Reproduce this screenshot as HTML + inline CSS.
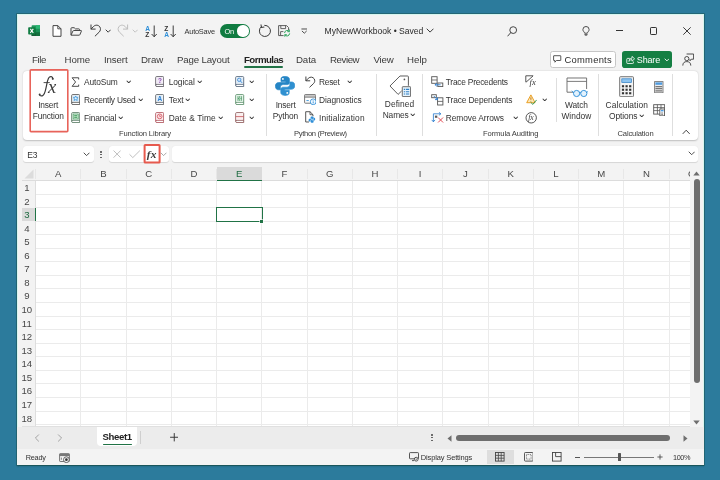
<!DOCTYPE html>
<html><head><meta charset="utf-8"><title>Excel</title>
<style>
html,body{margin:0;padding:0;}
body{width:720px;height:480px;overflow:hidden;background:#2c7b9c;position:relative;font-family:"Liberation Sans",sans-serif;}
#root{position:absolute;left:0;top:0;width:720px;height:480px;overflow:hidden;will-change:transform;}
.b{position:absolute;box-sizing:border-box;display:block;}
.t{position:absolute;white-space:nowrap;line-height:14px;font-family:"Liberation Sans",sans-serif;}
</style></head><body><div id="root">
<div class="b" style="left:16.70px;top:13.50px;width:687.50px;height:451.10px;background:#f3f3f3;box-shadow:0 0 0 0.8px rgba(28,88,90,0.7),0 1.2px 1.6px 0.3px rgba(10,60,62,0.65);"></div>
<div class="b" style="left:16.70px;top:13.50px;width:687.50px;height:451.10px;border:0.8px solid rgba(214,246,238,0.95);"></div>
<div class="b" style="left:22.50px;top:70.50px;width:675.50px;height:69.50px;background:#ffffff;border-radius:4px;box-shadow:0 0.6px 1.6px rgba(0,0,0,0.22);"></div>
<div class="b" style="left:23.00px;top:146.30px;width:71.00px;height:15.80px;background:#fff;border-radius:3px;box-shadow:0 0.5px 0.8px rgba(0,0,0,0.12);"></div>
<div class="b" style="left:109.00px;top:146.30px;width:60.00px;height:15.80px;background:#fff;border-radius:3px;box-shadow:0 0.5px 0.8px rgba(0,0,0,0.12);"></div>
<div class="b" style="left:172.00px;top:146.30px;width:526.20px;height:15.80px;background:#fff;border-radius:3px;box-shadow:0 0.5px 0.8px rgba(0,0,0,0.12);"></div>
<div class="b" style="left:22.00px;top:166.50px;width:668.00px;height:14.00px;background:#f3f3f3;"></div>
<div class="b" style="left:35.50px;top:180.50px;width:654.50px;height:245.80px;background:#fff;"></div>
<div class="b" style="left:22.00px;top:180.50px;width:13.50px;height:245.80px;background:#f3f3f3;"></div>
<div class="b" style="left:35.00px;top:180.50px;width:1px;height:245.80px;background:#ebebeb;"></div>
<div class="b" style="left:80.25px;top:180.50px;width:1px;height:245.80px;background:#ebebeb;"></div>
<div class="b" style="left:125.50px;top:180.50px;width:1px;height:245.80px;background:#ebebeb;"></div>
<div class="b" style="left:170.75px;top:180.50px;width:1px;height:245.80px;background:#ebebeb;"></div>
<div class="b" style="left:216.00px;top:180.50px;width:1px;height:245.80px;background:#ebebeb;"></div>
<div class="b" style="left:261.25px;top:180.50px;width:1px;height:245.80px;background:#ebebeb;"></div>
<div class="b" style="left:306.50px;top:180.50px;width:1px;height:245.80px;background:#ebebeb;"></div>
<div class="b" style="left:351.75px;top:180.50px;width:1px;height:245.80px;background:#ebebeb;"></div>
<div class="b" style="left:397.00px;top:180.50px;width:1px;height:245.80px;background:#ebebeb;"></div>
<div class="b" style="left:442.25px;top:180.50px;width:1px;height:245.80px;background:#ebebeb;"></div>
<div class="b" style="left:487.50px;top:180.50px;width:1px;height:245.80px;background:#ebebeb;"></div>
<div class="b" style="left:532.75px;top:180.50px;width:1px;height:245.80px;background:#ebebeb;"></div>
<div class="b" style="left:578.00px;top:180.50px;width:1px;height:245.80px;background:#ebebeb;"></div>
<div class="b" style="left:623.25px;top:180.50px;width:1px;height:245.80px;background:#ebebeb;"></div>
<div class="b" style="left:668.50px;top:180.50px;width:1px;height:245.80px;background:#ebebeb;"></div>
<div class="b" style="left:35.50px;top:180.00px;width:654.50px;height:1px;background:#ebebeb;"></div>
<div class="b" style="left:35.50px;top:193.56px;width:654.50px;height:1px;background:#ebebeb;"></div>
<div class="b" style="left:35.50px;top:207.12px;width:654.50px;height:1px;background:#ebebeb;"></div>
<div class="b" style="left:35.50px;top:220.68px;width:654.50px;height:1px;background:#ebebeb;"></div>
<div class="b" style="left:35.50px;top:234.24px;width:654.50px;height:1px;background:#ebebeb;"></div>
<div class="b" style="left:35.50px;top:247.80px;width:654.50px;height:1px;background:#ebebeb;"></div>
<div class="b" style="left:35.50px;top:261.36px;width:654.50px;height:1px;background:#ebebeb;"></div>
<div class="b" style="left:35.50px;top:274.92px;width:654.50px;height:1px;background:#ebebeb;"></div>
<div class="b" style="left:35.50px;top:288.48px;width:654.50px;height:1px;background:#ebebeb;"></div>
<div class="b" style="left:35.50px;top:302.04px;width:654.50px;height:1px;background:#ebebeb;"></div>
<div class="b" style="left:35.50px;top:315.60px;width:654.50px;height:1px;background:#ebebeb;"></div>
<div class="b" style="left:35.50px;top:329.16px;width:654.50px;height:1px;background:#ebebeb;"></div>
<div class="b" style="left:35.50px;top:342.72px;width:654.50px;height:1px;background:#ebebeb;"></div>
<div class="b" style="left:35.50px;top:356.28px;width:654.50px;height:1px;background:#ebebeb;"></div>
<div class="b" style="left:35.50px;top:369.84px;width:654.50px;height:1px;background:#ebebeb;"></div>
<div class="b" style="left:35.50px;top:383.40px;width:654.50px;height:1px;background:#ebebeb;"></div>
<div class="b" style="left:35.50px;top:396.96px;width:654.50px;height:1px;background:#ebebeb;"></div>
<div class="b" style="left:35.50px;top:410.52px;width:654.50px;height:1px;background:#ebebeb;"></div>
<div class="b" style="left:35.50px;top:424.08px;width:654.50px;height:1px;background:#ebebeb;"></div>
<div class="b" style="left:35.00px;top:169.00px;width:1.00px;height:9.50px;background:#e7e7e7;"></div>
<div class="b" style="left:80.25px;top:169.00px;width:1.00px;height:9.50px;background:#e7e7e7;"></div>
<div class="b" style="left:125.50px;top:169.00px;width:1.00px;height:9.50px;background:#e7e7e7;"></div>
<div class="b" style="left:170.75px;top:169.00px;width:1.00px;height:9.50px;background:#e7e7e7;"></div>
<div class="b" style="left:216.00px;top:169.00px;width:1.00px;height:9.50px;background:#e7e7e7;"></div>
<div class="b" style="left:261.25px;top:169.00px;width:1.00px;height:9.50px;background:#e7e7e7;"></div>
<div class="b" style="left:306.50px;top:169.00px;width:1.00px;height:9.50px;background:#e7e7e7;"></div>
<div class="b" style="left:351.75px;top:169.00px;width:1.00px;height:9.50px;background:#e7e7e7;"></div>
<div class="b" style="left:397.00px;top:169.00px;width:1.00px;height:9.50px;background:#e7e7e7;"></div>
<div class="b" style="left:442.25px;top:169.00px;width:1.00px;height:9.50px;background:#e7e7e7;"></div>
<div class="b" style="left:487.50px;top:169.00px;width:1.00px;height:9.50px;background:#e7e7e7;"></div>
<div class="b" style="left:532.75px;top:169.00px;width:1.00px;height:9.50px;background:#e7e7e7;"></div>
<div class="b" style="left:578.00px;top:169.00px;width:1.00px;height:9.50px;background:#e7e7e7;"></div>
<div class="b" style="left:623.25px;top:169.00px;width:1.00px;height:9.50px;background:#e7e7e7;"></div>
<div class="b" style="left:668.50px;top:169.00px;width:1.00px;height:9.50px;background:#e7e7e7;"></div>
<div class="b" style="left:22.00px;top:180.00px;width:668.00px;height:1.00px;background:#dcdcdc;"></div>
<div class="b" style="left:35.00px;top:180.50px;width:1.00px;height:245.80px;background:#dedede;"></div>
<div class="b" style="left:216.50px;top:167.00px;width:45.25px;height:13.50px;background:#dadada;"></div>
<div class="b" style="left:216.50px;top:179.50px;width:45.25px;height:1.30px;background:#217346;"></div>
<div class="b" style="left:22.00px;top:207.62px;width:13.50px;height:13.56px;background:#dadada;"></div>
<div class="b" style="left:34.60px;top:207.62px;width:1.30px;height:13.56px;background:#217346;"></div>
<svg class="b" style="left:24.00px;top:169.00px;" width="10.00" height="10.00" viewBox="0 0 10 10"><path d="M9.5 0.5 L9.5 9.5 L0.5 9.5 Z" fill="#dcdcdc"/></svg>
<span class="t" style="left:54.92px;top:167px;font-size:9.6px;letter-spacing:-0.000px;color:#474747;">A</span>
<span class="t" style="left:100.17px;top:167px;font-size:9.6px;letter-spacing:0.000px;color:#474747;">B</span>
<span class="t" style="left:145.16px;top:167px;font-size:9.6px;letter-spacing:-0.000px;color:#474747;">C</span>
<span class="t" style="left:190.41px;top:167px;font-size:9.6px;letter-spacing:-0.000px;color:#474747;">D</span>
<span class="t" style="left:235.92px;top:167px;font-size:9.6px;letter-spacing:0.000px;color:#1e6b41;">E</span>
<span class="t" style="left:281.44px;top:167px;font-size:9.6px;letter-spacing:0.000px;color:#474747;">F</span>
<span class="t" style="left:325.89px;top:167px;font-size:9.6px;letter-spacing:-0.000px;color:#474747;">G</span>
<span class="t" style="left:371.41px;top:167px;font-size:9.6px;letter-spacing:-0.000px;color:#474747;">H</span>
<span class="t" style="left:418.79px;top:167px;font-size:9.6px;letter-spacing:0.000px;color:#474747;">I</span>
<span class="t" style="left:462.98px;top:167px;font-size:9.6px;letter-spacing:-0.000px;color:#474747;">J</span>
<span class="t" style="left:507.42px;top:167px;font-size:9.6px;letter-spacing:-0.000px;color:#474747;">K</span>
<span class="t" style="left:553.21px;top:167px;font-size:9.6px;letter-spacing:0.000px;color:#474747;">L</span>
<span class="t" style="left:597.13px;top:167px;font-size:9.6px;letter-spacing:-0.000px;color:#474747;">M</span>
<span class="t" style="left:642.91px;top:167px;font-size:9.6px;letter-spacing:-0.000px;color:#474747;">N</span>
<div class="b" style="left:669.00px;top:166.5px;width:21.00px;height:14px;overflow:hidden;"><span class="t" style="left:18.93px;top:0.5px;font-size:9.6px;color:#3c3c3c;">O</span></div>
<span class="t" style="left:24.13px;top:181px;font-size:9.6px;letter-spacing:0.000px;color:#474747;">1</span>
<span class="t" style="left:24.13px;top:195px;font-size:9.6px;letter-spacing:0.000px;color:#474747;">2</span>
<span class="t" style="left:24.13px;top:208px;font-size:9.6px;letter-spacing:0.000px;color:#1e6b41;">3</span>
<span class="t" style="left:24.13px;top:222px;font-size:9.6px;letter-spacing:0.000px;color:#474747;">4</span>
<span class="t" style="left:24.13px;top:235px;font-size:9.6px;letter-spacing:0.000px;color:#474747;">5</span>
<span class="t" style="left:24.13px;top:249px;font-size:9.6px;letter-spacing:0.000px;color:#474747;">6</span>
<span class="t" style="left:24.13px;top:262px;font-size:9.6px;letter-spacing:0.000px;color:#474747;">7</span>
<span class="t" style="left:24.13px;top:276px;font-size:9.6px;letter-spacing:0.000px;color:#474747;">8</span>
<span class="t" style="left:24.13px;top:289px;font-size:9.6px;letter-spacing:0.000px;color:#474747;">9</span>
<span class="t" style="left:21.46px;top:303px;font-size:9.6px;letter-spacing:0.000px;color:#474747;">10</span>
<span class="t" style="left:21.82px;top:317px;font-size:9.6px;letter-spacing:0.000px;color:#474747;">11</span>
<span class="t" style="left:21.46px;top:330px;font-size:9.6px;letter-spacing:0.000px;color:#474747;">12</span>
<span class="t" style="left:21.46px;top:344px;font-size:9.6px;letter-spacing:0.000px;color:#474747;">13</span>
<span class="t" style="left:21.46px;top:357px;font-size:9.6px;letter-spacing:0.000px;color:#474747;">14</span>
<span class="t" style="left:21.46px;top:371px;font-size:9.6px;letter-spacing:0.000px;color:#474747;">15</span>
<span class="t" style="left:21.46px;top:384px;font-size:9.6px;letter-spacing:0.000px;color:#474747;">16</span>
<span class="t" style="left:21.46px;top:398px;font-size:9.6px;letter-spacing:0.000px;color:#474747;">17</span>
<span class="t" style="left:21.46px;top:412px;font-size:9.6px;letter-spacing:0.000px;color:#474747;">18</span>
<div class="b" style="left:215.70px;top:206.82px;width:46.85px;height:15.16px;border:1.3px solid #217346;"></div>
<div class="b" style="left:260.15px;top:219.58px;width:3.20px;height:3.20px;background:#217346;box-shadow:0 0 0 0.6px #fff;"></div>
<svg class="b" style="left:693.20px;top:170.60px;" width="7.00" height="5.00" viewBox="0 0 7 5"><path d="M3.5 0.5 L6.7 4.5 L0.3 4.5 Z" fill="#6e6e6e"/></svg>
<div class="b" style="left:693.60px;top:179.00px;width:6.20px;height:203.50px;background:#6e6e6e;border-radius:3.1px;"></div>
<svg class="b" style="left:693.20px;top:420.20px;" width="7.00" height="5.00" viewBox="0 0 7 5"><path d="M0.3 0.5 L6.7 0.5 L3.5 4.5 Z" fill="#6e6e6e"/></svg>
<div class="b" style="left:17.00px;top:426.80px;width:687.00px;height:22.00px;background:#ececec;"></div>
<div class="b" style="left:22.00px;top:426.30px;width:668.00px;height:0.80px;background:#e0e0e0;"></div>
<div class="b" style="left:97.00px;top:426.50px;width:40.00px;height:19.80px;background:#fff;border-radius:0 0 4px 4px;"></div>
<span class="t" style="left:102.50px;top:430px;font-size:9.6px;letter-spacing:-0.363px;color:#222;font-weight:bold;">Sheet1</span>
<div class="b" style="left:102.50px;top:443.80px;width:29.30px;height:1.40px;background:#217346;border-radius:1px;"></div>
<div class="b" style="left:140.40px;top:431.00px;width:0.80px;height:12.50px;background:#cfcfcf;"></div>
<svg class="b" style="left:34.00px;top:433.50px;" width="6.00" height="8.00" viewBox="0 0 6 8"><path d="M4.6 0.8 L1.4 4 L4.6 7.2" fill="none" stroke="#9a9a9a" stroke-width="0.9" stroke-linecap="round" stroke-linejoin="round"/></svg>
<svg class="b" style="left:57.00px;top:433.50px;" width="6.00" height="8.00" viewBox="0 0 6 8"><path d="M1.4 0.8 L4.6 4 L1.4 7.2" fill="none" stroke="#9a9a9a" stroke-width="0.9" stroke-linecap="round" stroke-linejoin="round"/></svg>
<svg class="b" style="left:169.50px;top:433.20px;" width="8.50" height="8.50" viewBox="0 0 8.5 8.5"><path d="M4.25 0.5 V8 M0.5 4.25 H8" fill="none" stroke="#333" stroke-width="0.95" stroke-linecap="round"/></svg>
<div class="b" style="left:431.30px;top:434.35px;width:1.40px;height:1.40px;background:#555;border-radius:50%;"></div>
<div class="b" style="left:431.30px;top:436.95px;width:1.40px;height:1.40px;background:#555;border-radius:50%;"></div>
<div class="b" style="left:431.30px;top:439.55px;width:1.40px;height:1.40px;background:#555;border-radius:50%;"></div>
<svg class="b" style="left:446.50px;top:434.50px;" width="5.00" height="7.00" viewBox="0 0 5 7"><path d="M4.5 0.3 L4.5 6.7 L0.5 3.5 Z" fill="#6e6e6e"/></svg>
<div class="b" style="left:455.50px;top:434.90px;width:214.20px;height:6.20px;background:#6e6e6e;border-radius:3.1px;"></div>
<svg class="b" style="left:682.80px;top:434.50px;" width="5.00" height="7.00" viewBox="0 0 5 7"><path d="M0.5 0.3 L0.5 6.7 L4.5 3.5 Z" fill="#6e6e6e"/></svg>
<div class="b" style="left:17.00px;top:448.80px;width:687.00px;height:16.20px;background:#f3f3f3;"></div>
<span class="t" style="left:25.70px;top:451px;font-size:7.3px;letter-spacing:-0.200px;color:#333;">Ready</span>
<span class="t" style="left:420.80px;top:451px;font-size:7.5px;letter-spacing:-0.148px;color:#333;">Display Settings</span>
<span class="t" style="left:673.10px;top:451px;font-size:7.3px;letter-spacing:-0.442px;color:#333;">100%</span>
<svg class="b" style="left:58.60px;top:452.60px;" width="11.60" height="10.40" viewBox="0 0 11.6 10.4"><rect x="0.6" y="0.7" width="9.8" height="7.8" rx="0.6" fill="#f3f3f3" stroke="#666" stroke-width="0.9"/><rect x="0.6" y="0.7" width="9.8" height="2.4" fill="#777"/><path d="M2.4 4.6 V6.8" stroke="#666" stroke-width="0.8"/><circle cx="7.4" cy="6.7" r="2.9" fill="#f3f3f3" stroke="#555" stroke-width="0.9"/><circle cx="7.4" cy="6.7" r="1.35" fill="#333"/></svg>
<svg class="b" style="left:409.20px;top:452.40px;" width="10.50" height="10.50" viewBox="0 0 10.5 10.5"><rect x="0.5" y="0.6" width="9" height="6.2" rx="0.7" fill="none" stroke="#444" stroke-width="0.9"/><path d="M3 8.6 H5" stroke="#444" stroke-width="0.9"/><circle cx="7.2" cy="7.2" r="1.9" fill="#f3f3f3" stroke="#444" stroke-width="0.9"/><circle cx="7.2" cy="7.2" r="0.6" fill="#444"/></svg>
<div class="b" style="left:486.80px;top:449.80px;width:27.20px;height:14.60px;background:#dedede;"></div>
<svg class="b" style="left:495.00px;top:452.40px;" width="9.60" height="9.60" viewBox="0 0 9.6 9.6"><rect x="0.5" y="0.5" width="8.6" height="8.6" fill="none" stroke="#444" stroke-width="0.9"/><path d="M3.4 0.5 V9.1 M6.2 0.5 V9.1 M0.5 3.4 H9.1 M0.5 6.2 H9.1" stroke="#444" stroke-width="0.8"/></svg>
<svg class="b" style="left:523.60px;top:452.40px;" width="9.60" height="9.60" viewBox="0 0 9.6 9.6"><rect x="0.5" y="0.5" width="8.6" height="8.6" rx="0.8" fill="none" stroke="#444" stroke-width="0.9"/><rect x="2.5" y="2.5" width="4.6" height="4.6" fill="none" stroke="#666" stroke-width="0.8" stroke-dasharray="1 0.7"/></svg>
<svg class="b" style="left:552.20px;top:452.40px;" width="9.60" height="9.60" viewBox="0 0 9.6 9.6"><rect x="0.5" y="0.5" width="8.6" height="8.6" fill="none" stroke="#444" stroke-width="0.9"/><path d="M3.6 0.5 V4.6 H9.1" fill="none" stroke="#444" stroke-width="0.9"/></svg>
<div class="b" style="left:575.00px;top:457.00px;width:4.80px;height:0.90px;background:#555;"></div>
<div class="b" style="left:584.00px;top:457.10px;width:70.00px;height:0.80px;background:#777;"></div>
<div class="b" style="left:618.00px;top:453.30px;width:3.20px;height:8.00px;background:#555;border-radius:0.6px;"></div>
<svg class="b" style="left:657.00px;top:454.40px;" width="6.00" height="6.00" viewBox="0 0 6 6"><path d="M3 0.4 V5.6 M0.4 3 H5.6" stroke="#444" stroke-width="0.85"/></svg>
<svg class="b" style="left:27.60px;top:24.80px;" width="12.60" height="11.60" viewBox="0 0 12.6 11.6"><rect x="3.6" y="0.2" width="8.8" height="11.2" rx="0.9" fill="#1e9a5d"/><rect x="8" y="0.2" width="4.4" height="3.7" fill="#2bb673"/><rect x="3.6" y="3.9" width="4.4" height="3.7" fill="#107c41"/><rect x="8" y="3.9" width="4.4" height="3.7" fill="#1b9257"/><rect x="3.6" y="7.6" width="8.8" height="3.8" fill="#185c37"/><rect x="8" y="7.6" width="4.4" height="3.8" fill="#13703d"/><rect x="0.2" y="2.3" width="7.2" height="7.2" rx="0.8" fill="#107c41"/><path d="M2.3 3.9 L5.3 7.9 M5.3 3.9 L2.3 7.9" stroke="#fff" stroke-width="1.05"/></svg>
<svg class="b" style="left:51.60px;top:25.00px;" width="10.00" height="12.00" viewBox="0 0 10 12"><path d="M1 0.6 H5.8 L9 3.8 V11.3 H1 Z" fill="#fff" stroke="#3b3b3b" stroke-width="0.95" stroke-linejoin="round"/><path d="M5.8 0.6 V3.8 H9" fill="none" stroke="#3b3b3b" stroke-width="0.9" stroke-linejoin="round"/></svg>
<svg class="b" style="left:69.60px;top:26.60px;" width="12.20" height="9.00" viewBox="0 0 12.2 9"><path d="M1 7.9 V1.5 Q1 0.7 1.8 0.7 H4.2 L5.4 1.9 H8.8 Q9.6 1.9 9.6 2.7 V3.6" fill="none" stroke="#3b3b3b" stroke-width="0.95" stroke-linejoin="round"/><path d="M1 8.2 L3 3.9 Q3.2 3.5 3.7 3.5 H10.9 Q11.7 3.5 11.4 4.2 L9.9 7.7 Q9.7 8.2 9.2 8.2 Z" fill="#f3f3f3" stroke="#3b3b3b" stroke-width="0.95" stroke-linejoin="round"/></svg>
<svg class="b" style="left:90.40px;top:24.40px;" width="11.60" height="12.80" viewBox="0 0 11.6 12.8"><path d="M1 0.9 V5.1 H5.2" fill="none" stroke="#3b3b3b" stroke-width="1" stroke-linecap="round" stroke-linejoin="round"/><path d="M1.2 4.9 L3.6 2.4 C5.6 0.5 8.6 0.9 9.9 3 C11 4.9 10.5 6.8 9 8.3 L5.2 12" fill="none" stroke="#3b3b3b" stroke-width="1" stroke-linecap="round" stroke-linejoin="round"/></svg>
<svg class="b" style="left:104.80px;top:28.70px;" width="6.40" height="4.20" viewBox="-1 -1 6.4 4.2"><path d="M0 0 L2.2 2.2 L4.4 0" fill="none" stroke="#3b3b3b" stroke-width="1.0" stroke-linecap="round" stroke-linejoin="round"/></svg>
<svg class="b" style="left:117.40px;top:24.40px;" width="11.60" height="12.80" viewBox="0 0 11.6 12.8"><g transform="translate(11.6 0) scale(-1 1)"><path d="M1 0.9 V5.1 H5.2" fill="none" stroke="#bdbdbd" stroke-width="1" stroke-linecap="round" stroke-linejoin="round"/><path d="M1.2 4.9 L3.6 2.4 C5.6 0.5 8.6 0.9 9.9 3 C11 4.9 10.5 6.8 9 8.3 L5.2 12" fill="none" stroke="#bdbdbd" stroke-width="1" stroke-linecap="round" stroke-linejoin="round"/></g></svg>
<svg class="b" style="left:132.10px;top:28.70px;" width="6.40" height="4.20" viewBox="-1 -1 6.4 4.2"><path d="M0 0 L2.2 2.2 L4.4 0" fill="none" stroke="#c4c4c4" stroke-width="1.0" stroke-linecap="round" stroke-linejoin="round"/></svg>
<svg class="b" style="left:144.60px;top:24.60px;" width="13.00" height="13.00" viewBox="0 0 13 13"><text x="0.2" y="5.6" font-family="Liberation Sans" font-weight="bold" font-size="6.6" fill="#2f8fd8">A</text><text x="0.2" y="12.2" font-family="Liberation Sans" font-weight="bold" font-size="6.6" fill="#333">Z</text><path d="M9.2 0.9 V11.6 M6.9 9.3 L9.2 11.7 L11.5 9.3" fill="none" stroke="#333" stroke-width="0.95" stroke-linecap="round" stroke-linejoin="round"/></svg>
<svg class="b" style="left:164.40px;top:24.60px;" width="13.00" height="13.00" viewBox="0 0 13 13"><text x="0.2" y="5.6" font-family="Liberation Sans" font-weight="bold" font-size="6.6" fill="#333">Z</text><text x="0.2" y="12.2" font-family="Liberation Sans" font-weight="bold" font-size="6.6" fill="#2f8fd8">A</text><path d="M9.2 0.9 V11.6 M6.9 9.3 L9.2 11.7 L11.5 9.3" fill="none" stroke="#333" stroke-width="0.95" stroke-linecap="round" stroke-linejoin="round"/></svg>
<span class="t" style="left:184.60px;top:25px;font-size:7.4px;letter-spacing:-0.236px;color:#333;">AutoSave</span>
<div class="b" style="left:219.60px;top:24.00px;width:30.40px;height:14.00px;background:#107c41;border-radius:7px;"></div>
<div class="b" style="left:237.40px;top:25.40px;width:11.20px;height:11.20px;background:#fff;border-radius:50%;"></div>
<span class="t" style="left:224.60px;top:25px;font-size:7.4px;letter-spacing:-0.235px;color:#fff;">On</span>
<svg class="b" style="left:258.20px;top:24.00px;" width="13.40" height="13.60" viewBox="0 0 13.4 13.6"><path d="M3.3 2.6 A5.6 5.6 0 1 0 6.7 1.3" fill="none" stroke="#3b3b3b" stroke-width="1" stroke-linecap="round"/><path d="M3.4 0.8 V3.4 H6" fill="none" stroke="#3b3b3b" stroke-width="1" stroke-linecap="round" stroke-linejoin="round" transform="rotate(-8 3.4 3.4)"/></svg>
<svg class="b" style="left:278.40px;top:25.20px;" width="12.40" height="11.60" viewBox="0 0 12.4 11.6"><path d="M0.6 0.6 H8.6 L10.6 2.6 V5.4 M5.6 10.6 H0.6 V0.6" fill="none" stroke="#555" stroke-width="0.95" stroke-linejoin="round"/><path d="M2.8 0.6 V3.6 H7.6 V0.6" fill="none" stroke="#555" stroke-width="0.9"/><path d="M2.6 10.4 V6.6 H5.4" fill="none" stroke="#555" stroke-width="0.9"/><path d="M6.6 7.6 A2.6 2.6 0 0 1 11.2 6.4 M11.6 8.8 A2.6 2.6 0 0 1 7 10" fill="none" stroke="#2aa35a" stroke-width="1" stroke-linecap="round"/><path d="M11.4 4.9 V6.7 H9.7 M6.8 11.4 V9.7 H8.5" fill="none" stroke="#2aa35a" stroke-width="0.9" stroke-linecap="round" stroke-linejoin="round"/></svg>
<svg class="b" style="left:300.80px;top:28.40px;" width="6.60" height="6.60" viewBox="0 0 6.6 6.6"><path d="M0.8 1 H5.8" stroke="#3b3b3b" stroke-width="0.9" stroke-linecap="round"/><path d="M1.2 3.2 L3.3 5.2 L5.4 3.2" fill="none" stroke="#3b3b3b" stroke-width="0.9" stroke-linecap="round" stroke-linejoin="round"/></svg>
<span class="t" style="left:324.60px;top:24px;font-size:8.6px;letter-spacing:-0.038px;color:#2b2b2b;">MyNewWorkbook • Saved</span>
<svg class="b" style="left:426.30px;top:28.45px;" width="8.20" height="5.10" viewBox="-1 -1 8.2 5.1"><path d="M0 0 L3.1 3.1 L6.2 0" fill="none" stroke="#3b3b3b" stroke-width="1.0" stroke-linecap="round" stroke-linejoin="round"/></svg>
<svg class="b" style="left:507.20px;top:25.60px;" width="10.40" height="11.00" viewBox="0 0 10.4 11"><circle cx="6.2" cy="4.1" r="3.4" fill="none" stroke="#3b3b3b" stroke-width="0.95"/><path d="M3.8 6.6 L0.8 10" stroke="#3b3b3b" stroke-width="0.95" stroke-linecap="round"/></svg>
<svg class="b" style="left:581.80px;top:25.60px;" width="8.00" height="10.60" viewBox="0 0 8 10.6"><path d="M2.6 7.2 C2.6 6 0.9 5.4 0.9 3.6 A3.1 3.1 0 0 1 7.1 3.6 C7.1 5.4 5.4 6 5.4 7.2 Z" fill="none" stroke="#3b3b3b" stroke-width="0.9" stroke-linejoin="round"/><path d="M2.8 8.6 H5.2 M3.3 9.9 H4.7" stroke="#3b3b3b" stroke-width="0.85" stroke-linecap="round"/></svg>
<div class="b" style="left:616.00px;top:30.20px;width:7.20px;height:0.95px;background:#333;"></div>
<div class="b" style="left:650.20px;top:27.00px;width:7.20px;height:7.60px;border:0.95px solid #333;border-radius:1.2px;"></div>
<svg class="b" style="left:683.00px;top:26.80px;" width="8.00" height="8.00" viewBox="0 0 8 8"><path d="M0.6 0.6 L7.4 7.4 M7.4 0.6 L0.6 7.4" stroke="#333" stroke-width="0.95" stroke-linecap="round"/></svg>
<span class="t" style="left:32.00px;top:53px;font-size:9.7px;letter-spacing:-0.407px;color:#3a3a3a;">File</span>
<span class="t" style="left:64.50px;top:53px;font-size:9.7px;letter-spacing:-0.093px;color:#3a3a3a;">Home</span>
<span class="t" style="left:104.00px;top:53px;font-size:9.7px;letter-spacing:-0.126px;color:#3a3a3a;">Insert</span>
<span class="t" style="left:141.00px;top:53px;font-size:9.7px;letter-spacing:-0.159px;color:#3a3a3a;">Draw</span>
<span class="t" style="left:177.00px;top:53px;font-size:9.7px;letter-spacing:-0.179px;color:#3a3a3a;">Page Layout</span>
<span class="t" style="left:244.00px;top:53px;font-size:9.7px;letter-spacing:-0.557px;color:#222;font-weight:bold;">Formulas</span>
<span class="t" style="left:296.00px;top:53px;font-size:9.7px;letter-spacing:-0.122px;color:#3a3a3a;">Data</span>
<span class="t" style="left:330.00px;top:53px;font-size:9.7px;letter-spacing:-0.434px;color:#3a3a3a;">Review</span>
<span class="t" style="left:373.40px;top:53px;font-size:9.7px;letter-spacing:-0.162px;color:#3a3a3a;">View</span>
<span class="t" style="left:407.00px;top:53px;font-size:9.7px;letter-spacing:0.013px;color:#3a3a3a;">Help</span>
<div class="b" style="left:244.00px;top:66.20px;width:39.20px;height:1.90px;background:#217346;border-radius:1px;"></div>
<div class="b" style="left:550.00px;top:51.20px;width:66.00px;height:16.40px;background:#fff;border:0.8px solid #c6c6c6;border-radius:2.6px;"></div>
<svg class="b" style="left:553.20px;top:55.20px;" width="8.40" height="8.00" viewBox="0 0 8.4 8"><path d="M0.9 0.7 H7.5 Q7.8 0.7 7.8 1 V5.2 Q7.8 5.5 7.5 5.5 H3.4 L1.9 7.2 V5.5 H0.9 Q0.6 5.5 0.6 5.2 V1 Q0.6 0.7 0.9 0.7 Z" fill="none" stroke="#3b3b3b" stroke-width="0.85" stroke-linejoin="round"/></svg>
<span class="t" style="left:564.60px;top:53px;font-size:9.4px;letter-spacing:0.245px;color:#2b2b2b;">Comments</span>
<div class="b" style="left:622.00px;top:51.20px;width:50.40px;height:16.40px;background:#157f43;border-radius:2.8px;"></div>
<svg class="b" style="left:626.00px;top:54.60px;" width="9.20" height="9.40" viewBox="0 0 9.2 9.4"><path d="M3.4 3.4 H1.6 Q0.8 3.4 0.8 4.2 V7.8 Q0.8 8.6 1.6 8.6 H6.6 Q7.4 8.6 7.4 7.8 V7" fill="none" stroke="#fff" stroke-width="0.85" stroke-linecap="round"/><path d="M3 6.4 C3 4.4 4.2 3.2 6 3.2 V1.4 L8.6 3.8 L6 6.2 V4.6 C4.6 4.6 3.6 5.2 3 6.4 Z" fill="none" stroke="#fff" stroke-width="0.8" stroke-linejoin="round"/></svg>
<span class="t" style="left:636.80px;top:53px;font-size:9px;letter-spacing:-0.163px;color:#fff;">Share</span>
<svg class="b" style="left:663.70px;top:57.85px;" width="5.80" height="3.90" viewBox="-1 -1 5.8 3.9"><path d="M0 0 L1.9 1.9 L3.8 0" fill="none" stroke="#fff" stroke-width="0.9" stroke-linecap="round" stroke-linejoin="round"/></svg>
<svg class="b" style="left:681.60px;top:53.40px;" width="12.60" height="13.00" viewBox="0 0 12.6 13"><path d="M4.6 1 H11.6 V6.2 H9.4 L8 7.8 V6.2" fill="none" stroke="#3b3b3b" stroke-width="0.9" stroke-linejoin="round"/><circle cx="4.8" cy="5.6" r="2.1" fill="#f3f3f3" stroke="#3b3b3b" stroke-width="0.9"/><path d="M0.8 12.2 C0.8 9.8 2.4 8.6 4.8 8.6 C7.2 8.6 8.8 9.8 8.8 12.2" fill="none" stroke="#3b3b3b" stroke-width="0.9" stroke-linecap="round"/></svg>
<svg class="b" style="left:36.00px;top:72.00px;" width="24.00" height="28.00" viewBox="0 0 24 28"><path d="M16.9 6.9 C16.9 4.2 13.9 3.6 12.5 6.2 C11.4 8.3 11 11.2 10.2 15 C9.4 19 8.7 23.1 6.3 23.8 C4.8 24.2 3.7 23.5 3.4 22.6" fill="none" stroke="#3a3a3a" stroke-width="1.2" stroke-linecap="round"/><path d="M8 10.6 H13.4" stroke="#3a3a3a" stroke-width="0.9" stroke-linecap="round"/><circle cx="16.7" cy="6.7" r="0.95" fill="#3a3a3a"/><circle cx="3.7" cy="22.5" r="0.95" fill="#3a3a3a"/></svg>
<span class="t" style="left:48.1px;top:73.9px;font-family:'Liberation Serif',serif;font-style:italic;font-size:18.6px;line-height:26px;color:#3a3a3a;">x</span>
<span class="t" style="left:38.20px;top:98px;font-size:8.4px;letter-spacing:-0.168px;color:#333;">Insert</span>
<span class="t" style="left:32.70px;top:109px;font-size:8.4px;letter-spacing:-0.114px;color:#333;">Function</span>
<svg class="b" style="left:28.00px;top:68.00px;" width="42.00" height="65.00" viewBox="0 0 42 65"><rect x="2.2" y="1.9" width="37.6" height="61.7" rx="0.8" fill="none" stroke="#e8635a" stroke-width="1.6"/></svg>
<svg class="b" style="left:70.90px;top:77.00px;" width="8.80" height="10.20" viewBox="0 0 8.8 10.6"><path d="M7.8 2.2 V0.8 H1 L4.6 5.2 L1 9.7 H7.8 V8.3" fill="none" stroke="#3b3b3b" stroke-width="0.95" stroke-linejoin="round" stroke-linecap="round"/></svg>
<span class="t" style="left:84.00px;top:75px;font-size:8.4px;letter-spacing:-0.107px;color:#333;">AutoSum</span>
<svg class="b" style="left:126.25px;top:79.72px;" width="5.50" height="3.75" viewBox="-1 -1 5.5 3.75"><path d="M0 0 L1.75 1.75 L3.5 0" fill="none" stroke="#3b3b3b" stroke-width="1.05" stroke-linecap="round" stroke-linejoin="round"/></svg>
<svg class="b" style="left:70.80px;top:93.80px;" width="9.40" height="11.40" viewBox="0 0 9.4 11.4"><path d="M0.7 9.4 V1.5 Q0.7 0.6 1.6 0.6 H7.8 Q8.7 0.6 8.7 1.5 V10.6 H1.9 Q0.7 10.6 0.7 9.4 Q0.7 8.3 1.9 8.3 H8.7" fill="#fff" stroke="#555" stroke-width="0.9" stroke-linejoin="round"/><rect x="1.7" y="1.6" width="6" height="5.8" fill="#cfe6f8"/><path d="M4.7 2 L5.4 3.6 L7.1 3.7 L5.8 4.8 L6.2 6.5 L4.7 5.6 L3.2 6.5 L3.6 4.8 L2.3 3.7 L4 3.6 Z" fill="#eef7fe" stroke="#2f8fd8" stroke-width="0.7" stroke-linejoin="round"/></svg>
<span class="t" style="left:84.00px;top:93px;font-size:8.4px;letter-spacing:-0.225px;color:#333;">Recently Used</span>
<svg class="b" style="left:137.95px;top:97.62px;" width="5.50" height="3.75" viewBox="-1 -1 5.5 3.75"><path d="M0 0 L1.75 1.75 L3.5 0" fill="none" stroke="#3b3b3b" stroke-width="1.05" stroke-linecap="round" stroke-linejoin="round"/></svg>
<svg class="b" style="left:70.80px;top:111.80px;" width="9.40" height="11.40" viewBox="0 0 9.4 11.4"><path d="M0.7 9.4 V1.5 Q0.7 0.6 1.6 0.6 H7.8 Q8.7 0.6 8.7 1.5 V10.6 H1.9 Q0.7 10.6 0.7 9.4 Q0.7 8.3 1.9 8.3 H8.7" fill="#fff" stroke="#5a7d66" stroke-width="0.9" stroke-linejoin="round"/><rect x="1.7" y="1.6" width="6" height="5.8" fill="#57a56f"/><rect x="2.9" y="2.7" width="3.6" height="3.6" fill="none" stroke="#c9ecd2" stroke-width="0.7"/><path d="M2.9 4.5 H6.5" stroke="#c9ecd2" stroke-width="0.6"/></svg>
<span class="t" style="left:84.00px;top:111px;font-size:8.4px;letter-spacing:-0.157px;color:#333;">Financial</span>
<svg class="b" style="left:118.45px;top:115.62px;" width="5.50" height="3.75" viewBox="-1 -1 5.5 3.75"><path d="M0 0 L1.75 1.75 L3.5 0" fill="none" stroke="#3b3b3b" stroke-width="1.05" stroke-linecap="round" stroke-linejoin="round"/></svg>
<svg class="b" style="left:155.00px;top:75.60px;" width="9.40" height="11.40" viewBox="0 0 9.4 11.4"><path d="M0.7 9.4 V1.5 Q0.7 0.6 1.6 0.6 H7.8 Q8.7 0.6 8.7 1.5 V10.6 H1.9 Q0.7 10.6 0.7 9.4 Q0.7 8.3 1.9 8.3 H8.7" fill="#fff" stroke="#5e5a63" stroke-width="0.9" stroke-linejoin="round"/><rect x="1.7" y="1.6" width="6" height="5.8" fill="#f1e8f7"/><text x="2.9" y="6.6" font-family="Liberation Sans" font-weight="bold" font-size="6.4" fill="#8a4fb0">?</text></svg>
<span class="t" style="left:168.70px;top:75px;font-size:8.4px;letter-spacing:-0.074px;color:#333;">Logical</span>
<svg class="b" style="left:197.05px;top:79.72px;" width="5.50" height="3.75" viewBox="-1 -1 5.5 3.75"><path d="M0 0 L1.75 1.75 L3.5 0" fill="none" stroke="#3b3b3b" stroke-width="1.05" stroke-linecap="round" stroke-linejoin="round"/></svg>
<svg class="b" style="left:155.00px;top:93.60px;" width="9.40" height="11.40" viewBox="0 0 9.4 11.4"><path d="M0.7 9.4 V1.5 Q0.7 0.6 1.6 0.6 H7.8 Q8.7 0.6 8.7 1.5 V10.6 H1.9 Q0.7 10.6 0.7 9.4 Q0.7 8.3 1.9 8.3 H8.7" fill="#fff" stroke="#565b62" stroke-width="0.9" stroke-linejoin="round"/><rect x="1.7" y="1.6" width="6" height="5.8" fill="#deeefb"/><text x="2.4" y="6.9" font-family="Liberation Sans" font-weight="bold" font-size="6.4" fill="#2f7fd0">A</text></svg>
<span class="t" style="left:168.70px;top:93px;font-size:8.4px;letter-spacing:-0.151px;color:#333;">Text</span>
<svg class="b" style="left:185.45px;top:97.62px;" width="5.50" height="3.75" viewBox="-1 -1 5.5 3.75"><path d="M0 0 L1.75 1.75 L3.5 0" fill="none" stroke="#3b3b3b" stroke-width="1.05" stroke-linecap="round" stroke-linejoin="round"/></svg>
<svg class="b" style="left:155.00px;top:111.60px;" width="9.40" height="11.40" viewBox="0 0 9.4 11.4"><path d="M0.7 9.4 V1.5 Q0.7 0.6 1.6 0.6 H7.8 Q8.7 0.6 8.7 1.5 V10.6 H1.9 Q0.7 10.6 0.7 9.4 Q0.7 8.3 1.9 8.3 H8.7" fill="#fff" stroke="#b0545c" stroke-width="0.9" stroke-linejoin="round"/><rect x="1.7" y="1.6" width="6" height="5.8" fill="#fdeced"/><circle cx="4.7" cy="4.4" r="2.4" fill="#fbdfe1" stroke="#cf4552" stroke-width="0.75"/><path d="M4.7 3 V4.5 H5.9" fill="none" stroke="#cf4552" stroke-width="0.65"/></svg>
<span class="t" style="left:168.70px;top:111px;font-size:8.4px;letter-spacing:0.099px;color:#333;">Date &amp; Time</span>
<svg class="b" style="left:218.25px;top:115.62px;" width="5.50" height="3.75" viewBox="-1 -1 5.5 3.75"><path d="M0 0 L1.75 1.75 L3.5 0" fill="none" stroke="#3b3b3b" stroke-width="1.05" stroke-linecap="round" stroke-linejoin="round"/></svg>
<svg class="b" style="left:235.40px;top:75.60px;" width="9.40" height="11.40" viewBox="0 0 9.4 11.4"><path d="M0.7 9.4 V1.5 Q0.7 0.6 1.6 0.6 H7.8 Q8.7 0.6 8.7 1.5 V10.6 H1.9 Q0.7 10.6 0.7 9.4 Q0.7 8.3 1.9 8.3 H8.7" fill="#fff" stroke="#53657a" stroke-width="0.9" stroke-linejoin="round"/><rect x="1.7" y="1.6" width="6" height="5.8" fill="#d9ebfa"/><circle cx="4.2" cy="3.8" r="1.7" fill="#d5e9fb" stroke="#2f7fd0" stroke-width="0.75"/><path d="M5.5 5.1 L7 6.7" stroke="#2f7fd0" stroke-width="0.8" stroke-linecap="round"/></svg>
<svg class="b" style="left:249.25px;top:79.72px;" width="5.50" height="3.75" viewBox="-1 -1 5.5 3.75"><path d="M0 0 L1.75 1.75 L3.5 0" fill="none" stroke="#3b3b3b" stroke-width="1.05" stroke-linecap="round" stroke-linejoin="round"/></svg>
<svg class="b" style="left:235.40px;top:93.60px;" width="9.40" height="11.40" viewBox="0 0 9.4 11.4"><path d="M0.7 9.4 V1.5 Q0.7 0.6 1.6 0.6 H7.8 Q8.7 0.6 8.7 1.5 V10.6 H1.9 Q0.7 10.6 0.7 9.4 Q0.7 8.3 1.9 8.3 H8.7" fill="#fff" stroke="#5a8f6a" stroke-width="0.9" stroke-linejoin="round"/><rect x="1.7" y="1.6" width="6" height="5.8" fill="#d6efdc"/><path d="M3 2.2 V6.8 M6.4 2.2 V6.8 M3 4.5 H4 M6.4 4.5 H5.4" stroke="#3f8f5a" stroke-width="0.7"/><path d="M4.7 2 Q3.9 4.5 4.7 7" fill="none" stroke="#3f8f5a" stroke-width="0.6"/></svg>
<svg class="b" style="left:249.25px;top:97.62px;" width="5.50" height="3.75" viewBox="-1 -1 5.5 3.75"><path d="M0 0 L1.75 1.75 L3.5 0" fill="none" stroke="#3b3b3b" stroke-width="1.05" stroke-linecap="round" stroke-linejoin="round"/></svg>
<svg class="b" style="left:235.40px;top:111.60px;" width="9.40" height="11.40" viewBox="0 0 9.4 11.4"><path d="M0.7 9.4 V1.5 Q0.7 0.6 1.6 0.6 H7.8 Q8.7 0.6 8.7 1.5 V10.6 H1.9 Q0.7 10.6 0.7 9.4 Q0.7 8.3 1.9 8.3 H8.7" fill="#fff" stroke="#8e5a5a" stroke-width="0.9" stroke-linejoin="round"/><rect x="1.7" y="1.6" width="6" height="5.8" fill="#fbeeee"/><path d="M0.7 4.6 H8.7" stroke="#c65058" stroke-width="0.8"/></svg>
<svg class="b" style="left:249.25px;top:115.62px;" width="5.50" height="3.75" viewBox="-1 -1 5.5 3.75"><path d="M0 0 L1.75 1.75 L3.5 0" fill="none" stroke="#3b3b3b" stroke-width="1.05" stroke-linecap="round" stroke-linejoin="round"/></svg>
<span class="t" style="left:119.00px;top:127px;font-size:7.6px;letter-spacing:-0.155px;color:#3a3a3a;">Function Library</span>
<div class="b" style="left:265.60px;top:74.00px;width:0.80px;height:61.50px;background:#dedede;"></div>
<div class="b" style="left:376.40px;top:74.00px;width:0.80px;height:61.50px;background:#dedede;"></div>
<div class="b" style="left:422.00px;top:74.00px;width:0.80px;height:61.50px;background:#dedede;"></div>
<div class="b" style="left:555.60px;top:77.50px;width:0.80px;height:44.00px;background:#dedede;"></div>
<div class="b" style="left:598.20px;top:74.00px;width:0.80px;height:61.50px;background:#dedede;"></div>
<div class="b" style="left:671.80px;top:74.00px;width:0.80px;height:61.50px;background:#dedede;"></div>
<svg class="b" style="left:275.20px;top:76.20px;" width="20.20" height="19.80" viewBox="0 0 20.2 19.8"><path d="M10 0.4 C6.6 0.4 6 1.6 6 3.2 V5.6 H10.4 V6.6 H3.6 C1.6 6.6 0.4 8 0.4 10.2 C0.4 12.4 1.6 13.8 3.4 13.8 H5.4 V11.4 C5.4 9.6 6.6 8.6 8.2 8.6 H12.2 C13.6 8.6 14.4 7.6 14.4 6.4 V3.2 C14.4 1.4 12.8 0.4 10 0.4 Z" fill="#2585c5" stroke="#2585c5" stroke-width="0.7" stroke-linejoin="round"/><circle cx="7.9" cy="2.9" r="0.95" fill="#fff"/><path d="M10.2 19.4 C13.6 19.4 14.2 18.2 14.2 16.6 V14.2 H9.8 V13.2 H16.6 C18.6 13.2 19.8 11.8 19.8 9.6 C19.8 7.4 18.6 6 16.8 6 H14.8 V8.4 C14.8 10.2 13.6 11.2 12 11.2 H8 C6.6 11.2 5.8 12.2 5.8 13.4 V16.6 C5.8 18.4 7.4 19.4 10.2 19.4 Z" fill="#2f90d0" stroke="#2f90d0" stroke-width="0.7" stroke-linejoin="round"/><circle cx="12.3" cy="16.9" r="0.95" fill="#fff"/></svg>
<span class="t" style="left:275.70px;top:98px;font-size:8.4px;letter-spacing:-0.168px;color:#333;">Insert</span>
<span class="t" style="left:272.70px;top:109px;font-size:8.4px;letter-spacing:-0.108px;color:#333;">Python</span>
<svg class="b" style="left:304.90px;top:75.80px;" width="10.80" height="11.80" viewBox="0 0 10.8 11.8"><path d="M0.9 0.9 V4.8 H4.8" fill="none" stroke="#3b3b3b" stroke-width="0.95" stroke-linecap="round" stroke-linejoin="round"/><path d="M1.1 4.6 L3.3 2.3 C5.2 0.5 8 0.9 9.2 2.8 C10.2 4.6 9.8 6.4 8.4 7.7 L4.8 11.1" fill="none" stroke="#3b3b3b" stroke-width="0.95" stroke-linecap="round" stroke-linejoin="round"/></svg>
<span class="t" style="left:319.00px;top:75px;font-size:8.4px;letter-spacing:-0.268px;color:#333;">Reset</span>
<svg class="b" style="left:346.75px;top:79.72px;" width="5.50" height="3.75" viewBox="-1 -1 5.5 3.75"><path d="M0 0 L1.75 1.75 L3.5 0" fill="none" stroke="#3b3b3b" stroke-width="1.05" stroke-linecap="round" stroke-linejoin="round"/></svg>
<svg class="b" style="left:303.80px;top:93.80px;" width="12.60" height="11.40" viewBox="0 0 12.6 11.4"><rect x="0.6" y="0.6" width="11" height="8.6" rx="0.6" fill="#fff" stroke="#666" stroke-width="0.9"/><rect x="1" y="1" width="10.2" height="2" fill="#c8c8c8"/><path d="M0.6 3.2 H11.6" stroke="#666" stroke-width="0.8"/><path d="M2.4 6.6 H4.8" stroke="#2f8fd8" stroke-width="0.9"/><circle cx="9.2" cy="7.8" r="2.9" fill="#f2f9ff" stroke="#2f8fd8" stroke-width="0.85"/><path d="M9.2 7.4 V9.4 M9.2 6 V6.6" stroke="#2f8fd8" stroke-width="0.9"/></svg>
<span class="t" style="left:319.00px;top:93px;font-size:8.4px;letter-spacing:-0.056px;color:#333;">Diagnostics</span>
<svg class="b" style="left:305.40px;top:111.40px;" width="10.40" height="12.00" viewBox="0 0 10.4 12"><path d="M4 11 H0.7 V0.7 H5 L8 3.7 V5.2" fill="#fff" stroke="#444" stroke-width="0.9" stroke-linejoin="round"/><path d="M5 0.7 V3.7 H8" fill="none" stroke="#444" stroke-width="0.8" stroke-linejoin="round"/><path d="M7.1 5.4 C5.8 5.4 5.6 5.9 5.6 6.5 V7.4 H7.3 V7.8 H4.8 C4 7.8 3.6 8.4 3.6 9.2 C3.6 10 4 10.6 4.8 10.6 H5.4 V9.7 C5.4 9 5.9 8.6 6.5 8.6 H7.9 C8.4 8.6 8.7 8.2 8.7 7.8 V6.5 C8.7 5.8 8.1 5.4 7.1 5.4 Z M7.1 11.8 C8.4 11.8 8.6 11.3 8.6 10.7 V9.8 H6.9 V9.4 H9.4 C10.2 9.4 10.2 8 10.2 8 C10.2 7.2 9.6 6.7 9 6.7 V7.8 C9 8.5 8.5 8.9 7.9 8.9 H6.5 C6 8.9 5.7 9.3 5.7 9.7 V10.7 C5.7 11.4 6.1 11.8 7.1 11.8 Z" fill="#2f8fd8"/></svg>
<span class="t" style="left:319.00px;top:111px;font-size:8.4px;letter-spacing:0.137px;color:#333;">Initialization</span>
<span class="t" style="left:294.00px;top:127px;font-size:7.6px;letter-spacing:-0.316px;color:#3a3a3a;">Python (Preview)</span>
<svg class="b" style="left:389.00px;top:74.60px;" width="22.40" height="22.40" viewBox="0 0 22.4 22.4"><path d="M12.4 16.2 L9.1 19.4 L1 11 L11 1 H18.6 Q19.4 1 19.4 1.8 V10.4" fill="none" stroke="#555" stroke-width="0.95" stroke-linejoin="round" stroke-linecap="round"/><circle cx="15.4" cy="4.4" r="0.85" fill="#555"/><rect x="13.3" y="11.7" width="8.3" height="9.9" rx="0.5" fill="#e6f3fc" stroke="#666" stroke-width="0.95"/><path d="M14.8 14.4 H16 M16.8 14.4 H20.2 M14.8 16.7 H16 M16.8 16.7 H20.2 M14.8 19 H16 M16.8 19 H20.2" stroke="#2f7fc4" stroke-width="1.1"/></svg>
<span class="t" style="left:384.80px;top:97px;font-size:8.4px;letter-spacing:0.093px;color:#333;">Defined</span>
<span class="t" style="left:382.70px;top:108px;font-size:8.4px;letter-spacing:-0.121px;color:#333;">Names</span>
<svg class="b" style="left:410.45px;top:112.72px;" width="5.50" height="3.75" viewBox="-1 -1 5.5 3.75"><path d="M0 0 L1.75 1.75 L3.5 0" fill="none" stroke="#3b3b3b" stroke-width="1.05" stroke-linecap="round" stroke-linejoin="round"/></svg>
<svg class="b" style="left:431.00px;top:75.60px;" width="12.60" height="11.40" viewBox="0 0 12.6 11.4"><rect x="0.7" y="0.7" width="5.4" height="6.6" fill="#fff" stroke="#555" stroke-width="0.9"/><path d="M0.7 4 H6.1" stroke="#555" stroke-width="0.8"/><rect x="6.8" y="7" width="5" height="3.6" fill="#fff" stroke="#555" stroke-width="0.9"/><path d="M9.2 8.8 H4.2 M5.6 7.5 L4.2 8.8 L5.6 10.1" fill="none" stroke="#2f7fd0" stroke-width="0.9" stroke-linecap="round" stroke-linejoin="round"/></svg>
<span class="t" style="left:445.80px;top:75px;font-size:8.4px;letter-spacing:-0.236px;color:#333;">Trace Precedents</span>
<svg class="b" style="left:431.00px;top:93.80px;" width="12.60" height="11.80" viewBox="0 0 12.6 11.8"><rect x="0.7" y="0.7" width="4.6" height="3" fill="#fff" stroke="#555" stroke-width="0.9"/><rect x="6.6" y="3.8" width="5.3" height="7.2" fill="#fff" stroke="#555" stroke-width="0.9"/><path d="M6.6 7.4 H11.9" stroke="#555" stroke-width="0.8"/><path d="M3 2.2 L6.2 5.4 M4.4 5.6 H6.4 V3.6" fill="none" stroke="#2f7fd0" stroke-width="0.9" stroke-linecap="round" stroke-linejoin="round"/></svg>
<span class="t" style="left:445.80px;top:93px;font-size:8.4px;letter-spacing:-0.131px;color:#333;">Trace Dependents</span>
<svg class="b" style="left:431.00px;top:112.20px;" width="12.80" height="10.80" viewBox="0 0 12.8 10.8"><path d="M2.4 9.6 V1.8 H9.6 M8.2 0.5 L9.8 1.8 L8.2 3.1 M1 8.2 L2.4 9.8 L3.8 8.2" fill="none" stroke="#2f7fd0" stroke-width="0.85" stroke-linecap="round" stroke-linejoin="round"/><rect x="3.9" y="3.6" width="2.4" height="2.2" fill="#5a5a5a"/><path d="M7.4 5.8 L11.8 10.2 M11.8 5.8 L7.4 10.2" stroke="#e0464e" stroke-width="0.95" stroke-linecap="round"/></svg>
<span class="t" style="left:445.80px;top:111px;font-size:8.4px;letter-spacing:-0.083px;color:#333;">Remove Arrows</span>
<svg class="b" style="left:512.65px;top:115.62px;" width="5.50" height="3.75" viewBox="-1 -1 5.5 3.75"><path d="M0 0 L1.75 1.75 L3.5 0" fill="none" stroke="#3b3b3b" stroke-width="1.05" stroke-linecap="round" stroke-linejoin="round"/></svg>
<svg class="b" style="left:524.80px;top:75.20px;" width="12.60" height="11.80" viewBox="0 0 12.6 11.8"><path d="M0.8 7 V0.8 H8" fill="none" stroke="#444" stroke-width="0.9"/><path d="M8.2 0.8 L0.8 7.4" stroke="#444" stroke-width="0.9"/><text x="4.6" y="10.4" font-family="Liberation Serif" font-style="italic" font-size="8.6" fill="#333">fx</text></svg>
<svg class="b" style="left:525.60px;top:93.80px;" width="11.20" height="11.20" viewBox="0 0 11.2 11.2"><path d="M4.9 0.9 L0.7 8.7 H9.1 Z" fill="#fde7b8" stroke="#e89a1c" stroke-width="0.95" stroke-linejoin="round"/><path d="M4.9 3.4 V5.8 M4.9 6.9 V7.5" stroke="#b56a00" stroke-width="0.9"/><path d="M5 8.6 L6.9 10.4 L10.4 6.2" fill="none" stroke="#3a9a55" stroke-width="1" stroke-linecap="round" stroke-linejoin="round"/></svg>
<svg class="b" style="left:541.85px;top:97.62px;" width="5.50" height="3.75" viewBox="-1 -1 5.5 3.75"><path d="M0 0 L1.75 1.75 L3.5 0" fill="none" stroke="#3b3b3b" stroke-width="1.05" stroke-linecap="round" stroke-linejoin="round"/></svg>
<svg class="b" style="left:525.20px;top:111.80px;" width="12.40" height="12.00" viewBox="0 0 12.4 12"><circle cx="6.2" cy="5.8" r="5.2" fill="#fff" stroke="#444" stroke-width="0.9"/><text x="3.2" y="8.2" font-family="Liberation Serif" font-style="italic" font-size="7.6" fill="#333">fx</text></svg>
<span class="t" style="left:483.00px;top:127px;font-size:7.6px;letter-spacing:-0.102px;color:#3a3a3a;">Formula Auditing</span>
<svg class="b" style="left:565.80px;top:77.40px;" width="22.00" height="20.40" viewBox="0 0 22 20.4"><path d="M7 15.2 H1 V1 H20.6 V12" fill="none" stroke="#6e6e6e" stroke-width="0.95" stroke-linejoin="round"/><path d="M1 4.4 H20.6" stroke="#6e6e6e" stroke-width="0.9"/><circle cx="10.6" cy="16.5" r="3.1" fill="#e3f2fd" stroke="#2f8fd8" stroke-width="0.95"/><circle cx="17.8" cy="16.5" r="3.1" fill="#e3f2fd" stroke="#2f8fd8" stroke-width="0.95"/><path d="M13.6 15.6 Q14.2 14.9 14.8 15.6 M7.6 15.6 L6 14.2 M20.8 15.6 L21.6 14.6" fill="none" stroke="#2f8fd8" stroke-width="0.9" stroke-linecap="round"/></svg>
<span class="t" style="left:565.00px;top:98px;font-size:8.4px;letter-spacing:-0.139px;color:#333;">Watch</span>
<span class="t" style="left:561.40px;top:109px;font-size:8.4px;letter-spacing:0.021px;color:#333;">Window</span>
<svg class="b" style="left:619.20px;top:75.60px;" width="15.20" height="21.40" viewBox="0 0 15.2 21.4"><rect x="0.7" y="0.7" width="13.8" height="20" rx="0.8" fill="#f4f4f4" stroke="#6e6e6e" stroke-width="0.95"/><rect x="2.8" y="2.8" width="9.6" height="3.8" fill="#8cc3f0" stroke="#2f7fc4" stroke-width="0.7"/><rect x="2.9" y="9.2" width="2.2" height="2.1" fill="#333"/><rect x="2.9" y="12.7" width="2.2" height="2.1" fill="#333"/><rect x="2.9" y="16.2" width="2.2" height="2.1" fill="#333"/><rect x="6.5" y="9.2" width="2.2" height="2.1" fill="#333"/><rect x="6.5" y="12.7" width="2.2" height="2.1" fill="#333"/><rect x="6.5" y="16.2" width="2.2" height="2.1" fill="#333"/><rect x="10.1" y="9.2" width="2.2" height="2.1" fill="#333"/><rect x="10.1" y="12.7" width="2.2" height="2.1" fill="#333"/><rect x="10.1" y="16.2" width="2.2" height="2.1" fill="#333"/></svg>
<span class="t" style="left:605.60px;top:98px;font-size:8.4px;letter-spacing:0.077px;color:#333;">Calculation</span>
<span class="t" style="left:609.00px;top:109px;font-size:8.4px;letter-spacing:-0.078px;color:#333;">Options</span>
<svg class="b" style="left:639.45px;top:113.62px;" width="5.50" height="3.75" viewBox="-1 -1 5.5 3.75"><path d="M0 0 L1.75 1.75 L3.5 0" fill="none" stroke="#3b3b3b" stroke-width="1.05" stroke-linecap="round" stroke-linejoin="round"/></svg>
<svg class="b" style="left:654.00px;top:80.80px;" width="9.60" height="12.40" viewBox="0 0 9.6 12.4"><rect x="0.6" y="0.6" width="8.4" height="11.2" fill="#ededed" stroke="#777" stroke-width="0.9"/><rect x="1.4" y="1.4" width="6.8" height="2.4" fill="#4e9be0"/><path d="M1.4 5.6 H8.2 M1.4 7.7 H8.2 M1.4 9.8 H8.2" stroke="#777" stroke-width="1.2"/></svg>
<svg class="b" style="left:653.00px;top:103.60px;" width="12.40" height="12.40" viewBox="0 0 12.4 12.4"><rect x="0.7" y="0.7" width="11" height="9.4" fill="#fff" stroke="#555" stroke-width="0.9"/><path d="M0.7 3.6 H11.7 M0.7 6.6 H11.7 M4.4 0.7 V10.1 M8 0.7 V10.1" stroke="#555" stroke-width="0.8"/><rect x="6.8" y="5" width="4.8" height="6.8" fill="#fff" stroke="#555" stroke-width="0.85"/><rect x="7.8" y="6" width="2.8" height="1.4" fill="#4e9be0"/><path d="M7.8 9 H10.6 M7.8 10.4 H10.6" stroke="#444" stroke-width="0.8" stroke-dasharray="0.9 0.5"/></svg>
<span class="t" style="left:617.50px;top:127px;font-size:7.6px;letter-spacing:-0.145px;color:#3a3a3a;">Calculation</span>
<svg class="b" style="left:682.00px;top:129.40px;" width="8.40" height="5.60" viewBox="0 0 8.4 5.6"><path d="M1 4.6 L4.2 1.2 L7.4 4.6" fill="none" stroke="#3b3b3b" stroke-width="0.95" stroke-linecap="round" stroke-linejoin="round"/></svg>
<span class="t" style="left:27.20px;top:148px;font-size:8.5px;letter-spacing:-0.098px;color:#333;">E3</span>
<svg class="b" style="left:82.60px;top:151.90px;" width="7.20" height="4.60" viewBox="-1 -1 7.2 4.6"><path d="M0 0 L2.6 2.6 L5.2 0" fill="none" stroke="#444" stroke-width="0.95" stroke-linecap="round" stroke-linejoin="round"/></svg>
<div class="b" style="left:100.40px;top:151.30px;width:1.40px;height:1.40px;background:#555;border-radius:50%;"></div>
<div class="b" style="left:100.40px;top:153.90px;width:1.40px;height:1.40px;background:#555;border-radius:50%;"></div>
<div class="b" style="left:100.40px;top:156.50px;width:1.40px;height:1.40px;background:#555;border-radius:50%;"></div>
<svg class="b" style="left:112.90px;top:150.20px;" width="8.20" height="8.20" viewBox="0 0 8 8"><path d="M0.8 0.8 L7.2 7.2 M7.2 0.8 L0.8 7.2" stroke="#b5b5b5" stroke-width="0.85" stroke-linecap="round"/></svg>
<svg class="b" style="left:129.00px;top:150.40px;" width="11.40" height="8.40" viewBox="0 0 11.4 8.4"><path d="M0.8 4.6 L3.8 7.6 L10.6 0.9" fill="none" stroke="#b5b5b5" stroke-width="0.85" stroke-linecap="round" stroke-linejoin="round"/></svg>
<span class="t" style="left:146.8px;top:146.6px;font-family:'Liberation Serif',serif;font-style:italic;font-weight:bold;font-size:11.4px;line-height:14px;letter-spacing:0.1px;color:#3a3a3a;">fx</span>
<svg class="b" style="left:142.00px;top:143.00px;" width="21.00" height="23.00" viewBox="0 0 21 23"><rect x="2.6" y="1.9" width="15" height="17.7" rx="0.6" fill="none" stroke="#e65a4e" stroke-width="2"/></svg>
<svg class="b" style="left:160.30px;top:152.30px;" width="7.20" height="4.60" viewBox="-1 -1 7.2 4.6"><path d="M0 0 L2.6 2.6 L5.2 0" fill="none" stroke="#9a9a9a" stroke-width="0.85" stroke-linecap="round" stroke-linejoin="round"/></svg>
<svg class="b" style="left:687.70px;top:151.45px;" width="7.40" height="4.70" viewBox="-1 -1 7.4 4.7"><path d="M0 0 L2.7 2.7 L5.4 0" fill="none" stroke="#444" stroke-width="0.95" stroke-linecap="round" stroke-linejoin="round"/></svg>
</div></body></html>
